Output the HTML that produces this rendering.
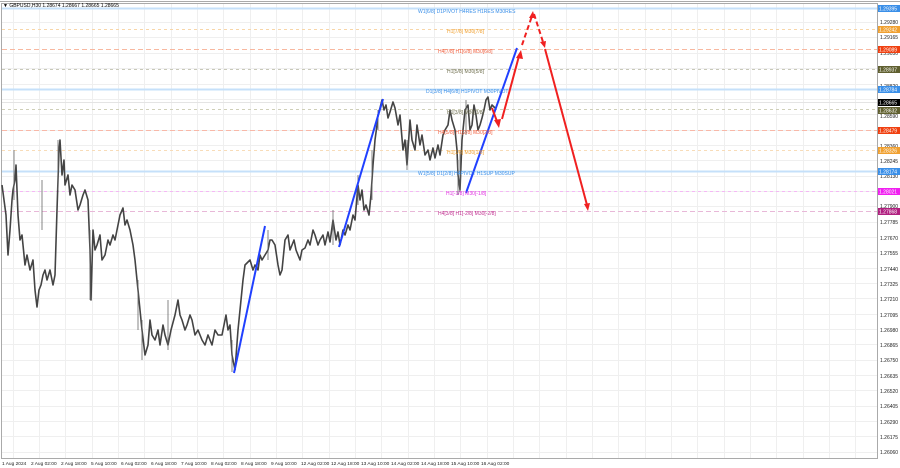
<!DOCTYPE html>
<html><head><meta charset="utf-8"><style>
html,body{margin:0;padding:0;background:#fff;}
svg{display:block;font-family:"Liberation Sans",sans-serif;}
</style></head><body>
<svg width="900" height="468" viewBox="0 0 900 468" xmlns="http://www.w3.org/2000/svg">
<rect width="900" height="468" fill="#fff"/>
<g stroke="#efefef" stroke-width="1">
<path d="M13.5 3V458M39.5 3V458M65.5 3V458M92.5 3V458M118.5 3V458M144.5 3V458M171.5 3V458M197.5 3V458M223.5 3V458M250.5 3V458M276.5 3V458M302.5 3V458M329.5 3V458M355.5 3V458M381.5 3V458M408.5 3V458M434.5 3V458M460.5 3V458M487.5 3V458M513.5 3V458M539.5 3V458M566.5 3V458M592.5 3V458M618.5 3V458M645.5 3V458M671.5 3V458M697.5 3V458M724.5 3V458M750.5 3V458M776.5 3V458M803.5 3V458M829.5 3V458M855.5 3V458"/>
<path d="M2 22.5H877M2 37.5H877M2 53.5H877M2 68.5H877M2 84.5H877M2 99.5H877M2 114.5H877M2 130.5H877M2 145.5H877M2 160.5H877M2 176.5H877M2 191.5H877M2 206.5H877M2 222.5H877M2 237.5H877M2 252.5H877M2 268.5H877M2 283.5H877M2 298.5H877M2 314.5H877M2 329.5H877M2 344.5H877M2 360.5H877M2 375.5H877M2 390.5H877M2 406.5H877M2 421.5H877M2 436.5H877M2 452.5H877"/>
</g>
<rect x="1.5" y="3.5" width="876" height="455" fill="none" stroke="#aaa"/>
<line x1="0" y1="1.5" x2="900" y2="1.5" stroke="#aaa"/>
<g stroke-width="1">
<line x1="2" y1="8.5" x2="877" y2="8.5" stroke="#c5e0fa" stroke-width="2"/>
<line x1="2" y1="29.5" x2="877" y2="29.5" stroke="#f8d6a8" stroke-dasharray="3,3"/>
<line x1="2" y1="49.5" x2="877" y2="49.5" stroke="#f8b8a0" stroke-dasharray="5,3"/>
<line x1="2" y1="69.5" x2="877" y2="69.5" stroke="#c8c8b8" stroke-dasharray="3,3"/>
<line x1="2" y1="89.5" x2="877" y2="89.5" stroke="#c5e0fa" stroke-width="2"/>
<line x1="2" y1="102.5" x2="877" y2="102.5" stroke="#e4e4e4"/>
<line x1="2" y1="109.5" x2="877" y2="109.5" stroke="#cfcfb8" stroke-dasharray="3,3"/>
<line x1="2" y1="130.5" x2="877" y2="130.5" stroke="#f8b8a8" stroke-dasharray="5,3"/>
<line x1="2" y1="150.5" x2="877" y2="150.5" stroke="#f8dcb8" stroke-dasharray="3,3"/>
<line x1="2" y1="171.5" x2="877" y2="171.5" stroke="#c5e0fa" stroke-width="2"/>
<line x1="2" y1="191.5" x2="877" y2="191.5" stroke="#f5b8f5" stroke-dasharray="3,3"/>
<line x1="2" y1="211.5" x2="877" y2="211.5" stroke="#e8b8d8" stroke-dasharray="5,3"/>
</g>
<polyline fill="none" stroke="#444" stroke-width="1.6" stroke-linejoin="round" points="2,185 4,200 6,215 8,255 10,230 12,200 13,190 15,180 16,165 18,215 20,240 22,235 25,265 27,255 30,270 33,260 35,290 37,307 39,290 41,285 43,275 45,270 47,280 50,270 53,285 55,275 57,210 59,150 60,140 62,175 64,160 65,185 68,175 70,195 72,185 75,190 78,210 80,205 83,195 85,190 88,200 90,250 91,300 93,230 95,250 97,245 100,235 102,260 105,255 108,240 110,245 113,235 115,240 118,225 120,215 123,208 125,225 127,220 130,230 133,245 135,260 138,290 140,310 142,330 145,355 148,345 150,320 152,335 155,340 158,330 160,345 163,325 165,335 168,345 171,330 175,315 178,300 180,315 182,320 185,330 187,325 190,315 192,320 195,335 198,330 202,340 205,345 208,335 212,345 215,330 218,335 222,335 224,325 226,315 228,330 230,325 232,355 235,370 238,330 241,300 243,280 245,265 248,262 250,260 253,270 255,265 258,270 260,255 262,260 265,255 268,250 270,240 272,240 275,245 278,265 280,275 282,270 285,240 288,235 290,250 292,245 294,240 296,250 300,260 302,250 305,248 308,240 310,245 313,230 315,235 318,245 320,240 323,235 325,245 328,232 330,242 333,220 336,240 338,232 340,245 343,230 345,235 348,225 350,230 353,215 355,220 358,185 360,200 362,190 364,210 366,205 369,215 371,195 373,165 375,140 377,125 378,115 380,108 382,100 384,110 386,105 388,118 390,112 393,102 395,108 398,125 400,115 403,150 405,140 407,165 410,120 412,140 415,150 417,125 420,145 422,135 425,155 428,150 430,160 433,148 435,158 438,145 440,155 443,135 445,130 448,125 450,110 452,120 455,130 457,150 458,175 460,190 462,140 464,120 465,110 468,105 470,130 472,125 474,105 476,115 478,130 480,125 482,118 484,110 486,100 488,97 490,110 492,105 495,108"/>
<g stroke="#666" stroke-width="0.8">
<path d="M14 150V200M42 180V230M58 140V190M90 230V300M138 280V330M142 320V360M168 300V350M232 340V372M268 230V260M333 210V245M358 175V205M372 150V200M378 110V130M407 140V170M458 160V195M460 150V192M466 100V135"/>
</g>
<g stroke="#2040ff" stroke-width="2">
<line x1="234" y1="373" x2="265" y2="226"/>
<line x1="339" y1="247" x2="383" y2="99"/>
<line x1="466" y1="193" x2="517" y2="48"/>
</g>
<g stroke="#f02020" stroke-width="2" fill="#f02020">
<line x1="492" y1="108" x2="498" y2="124"/>
<polygon points="494,120 501,119 499,128" stroke="none"/>
<line x1="502" y1="119" x2="519" y2="56"/>
<polygon points="516,58 523,59 521,50" stroke="none"/>
<line x1="522" y1="45" x2="532" y2="16" stroke-dasharray="5,3"/>
<polygon points="529,18 535,18 533,11" stroke="none"/>
<line x1="534" y1="14" x2="543" y2="42" stroke-dasharray="5,3"/>
<polygon points="540,42 546,41 545,48" stroke="none"/>
<line x1="545" y1="49" x2="587" y2="205"/>
<polygon points="584,204 590,203 588,211" stroke="none"/>
</g>
<g font-size="5">
<text x="418" y="13" fill="#3a8fe8">W1[6/8] D1PIVOT H4RES H1RES M30RES</text>
<text x="447" y="33" fill="#f0a030">H1[7/8] M30[7/8]</text>
<text x="438" y="53" fill="#f06040">H4[7/8] H1[6/8] M30[6/8]</text>
<text x="447" y="73" fill="#707050">H1[5/8] M30[5/8]</text>
<text x="426" y="93" fill="#3a8fe8">D1[3/8] H4[6/8] H1PIVOT M30PIVOT</text>
<text x="447" y="114" fill="#707050">H1[3/8] M30[3/8]</text>
<text x="438" y="134" fill="#f06040">H4[5/8] H1[2/8] M30[2/8]</text>
<text x="447" y="154" fill="#f0a030">H1[1/8] M30[1/8]</text>
<text x="418" y="175" fill="#3a8fe8">W1[5/8] D1[2/8] H4PIVOT H1SUP M30SUP</text>
<text x="446" y="195" fill="#e030e0">H1[-1/8] M30[-1/8]</text>
<text x="438" y="215" fill="#c03090">H4[3/8] H1[-2/8] M30[-2/8]</text>
</g>
<text x="3" y="7" font-size="5" fill="#000">▼ GBPUSD,H30  1.28674 1.28667 1.28665 1.28665</text>
<g font-size="5" fill="#222">
<text x="880" y="24">1.29280</text><text x="880" y="39">1.29165</text><text x="880" y="55">1.29050</text>
<text x="880" y="88">1.28820</text><text x="880" y="118">1.28590</text><text x="880" y="148">1.28360</text>
<text x="880" y="163">1.28245</text><text x="880" y="178">1.28130</text><text x="880" y="208">1.27900</text>
<text x="880" y="224">1.27785</text><text x="880" y="240">1.27670</text><text x="880" y="255">1.27555</text>
<text x="880" y="271">1.27440</text><text x="880" y="286">1.27325</text><text x="880" y="301">1.27210</text>
<text x="880" y="317">1.27095</text><text x="880" y="332">1.26980</text><text x="880" y="347">1.26865</text>
<text x="880" y="362">1.26750</text><text x="880" y="378">1.26635</text><text x="880" y="393">1.26520</text>
<text x="880" y="408">1.26405</text><text x="880" y="424">1.26290</text><text x="880" y="439">1.26175</text>
<text x="880" y="454">1.26060</text>
</g>
<g font-size="5" fill="#fff">
<rect x="878" y="5" width="22" height="7" fill="#3a8fe8"/><text x="879" y="10.5">1.29395</text>
<rect x="878" y="26" width="22" height="7" fill="#f0a030"/><text x="879" y="31.5">1.29242</text>
<rect x="878" y="46" width="22" height="7" fill="#f04010"/><text x="879" y="51.5">1.29089</text>
<rect x="878" y="66" width="22" height="7" fill="#606030"/><text x="879" y="71.5">1.28937</text>
<rect x="878" y="86" width="22" height="7" fill="#3a8fe8"/><text x="879" y="91.5">1.28784</text>
<rect x="878" y="99" width="22" height="7" fill="#000"/><text x="879" y="104.5">1.28665</text>
<rect x="878" y="107" width="22" height="7" fill="#606030"/><text x="879" y="112.5">1.28632</text>
<rect x="878" y="127" width="22" height="7" fill="#f04010"/><text x="879" y="132.5">1.28479</text>
<rect x="878" y="147" width="22" height="7" fill="#f0a030"/><text x="879" y="152.5">1.28326</text>
<rect x="878" y="168" width="22" height="7" fill="#3a8fe8"/><text x="879" y="173.5">1.28174</text>
<rect x="878" y="188" width="22" height="7" fill="#f020f0"/><text x="879" y="193.5">1.28021</text>
<rect x="878" y="208" width="22" height="7" fill="#b02080"/><text x="879" y="213.5">1.27868</text>
</g>
<g font-size="4.8" fill="#222">
<text x="2" y="465">1 Aug 2024</text><text x="31" y="465">2 Aug 02:00</text><text x="61" y="465">2 Aug 18:00</text>
<text x="91" y="465">5 Aug 10:00</text><text x="121" y="465">6 Aug 02:00</text><text x="151" y="465">6 Aug 18:00</text>
<text x="181" y="465">7 Aug 10:00</text><text x="211" y="465">8 Aug 02:00</text><text x="241" y="465">8 Aug 18:00</text>
<text x="271" y="465">9 Aug 10:00</text><text x="301" y="465">12 Aug 02:00</text><text x="331" y="465">12 Aug 18:00</text>
<text x="361" y="465">13 Aug 10:00</text><text x="391" y="465">14 Aug 02:00</text><text x="421" y="465">14 Aug 18:00</text>
<text x="451" y="465">15 Aug 10:00</text><text x="481" y="465">16 Aug 02:00</text>
</g>
</svg>
</body></html>
